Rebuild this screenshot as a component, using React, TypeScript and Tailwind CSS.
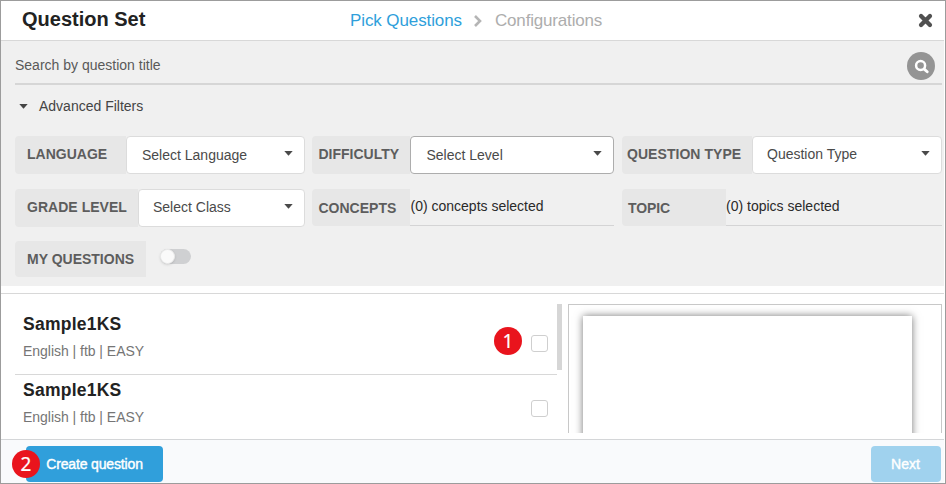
import type { ReactNode } from "react";

function Caret({ className = "" }: { className?: string }) {
  return (
    <svg className={className} width="9" height="5" viewBox="0 0 9 5" fill="currentColor">
      <path d="M0.3 0h8.4L4.5 4.8z" />
    </svg>
  );
}

function Label({ children, className }: { children: ReactNode; className: string }) {
  return (
    <div className={`flex shrink-0 items-center bg-[#e7e7e7] text-sm font-bold whitespace-nowrap text-[#5d5d5d] ${className}`}>
      {children}
    </div>
  );
}

function Select({ children, className, text = "" }: { children: ReactNode; className: string; text?: string }) {
  return (
    <button className={`flex h-[38px] flex-1 items-center justify-between rounded border bg-white text-sm whitespace-nowrap text-[#4a4a4a] ${className}`}>
      <span className={text}>{children}</span>
      <Caret className="mb-1" />
    </button>
  );
}

function Picked({ children, className = "" }: { children: ReactNode; className?: string }) {
  return (
    <div className={`h-[37px] flex-1 border-b border-[#d4d4d5] pt-[7px] text-sm leading-5 whitespace-nowrap text-[#2a2a2a] ${className}`}>
      {children}
    </div>
  );
}

function Question({ title, className, box }: { title: string; className: string; box: string }) {
  return (
    <div className={`flex justify-between pr-[9px] pl-2 ${className}`}>
      <div>
        <h3 className="text-[17.5px] leading-6 font-bold tracking-[0.25px] text-[#222]">{title}</h3>
        <p className="mt-[5px] text-sm leading-5 tracking-[-0.03px] text-[#757575]">English | ftb | EASY</p>
      </div>
      <span className={`size-[17px] rounded-[3px] border border-[#cfcfcf] bg-white ${box}`} />
    </div>
  );
}

export default function App() {
  return (
    <div className="flex h-[484px] w-[946px] flex-col overflow-hidden border border-[#9c9c9c] bg-white font-['Liberation_Sans',Arial,sans-serif]">
      <header className="mr-px flex h-10 shrink-0 items-center border-b border-[#d8d8d8] pr-[11px] pl-[21px]">
        <h1 className="w-[328px] pb-[3px] text-[20px] leading-6 font-bold text-[#222]">Question Set</h1>
        <nav className="flex items-center text-[17px] leading-6">
          <span className="w-[123px] tracking-[-0.1px] text-[#2f9fdb]">Pick Questions</span>
          <svg width="10" height="12" viewBox="0 0 10 12" fill="none" stroke="#b5b5b5" strokeWidth="2.6" className="mr-[12px]">
            <path d="M2 1l5 5-5 5" />
          </svg>
          <span className="tracking-[-0.18px] text-[#adadad]">Configurations</span>
        </nav>
        <svg className="mb-px ml-auto" width="15" height="15" viewBox="0 0 15 15" stroke="#505050" strokeWidth="4.2" strokeLinejoin="round">
          <path d="M2.6 2.6l9.8 9.8M12.4 2.6L2.6 12.4" strokeWidth="3.6" />
          <path d="M3 3l9 9M12 3L3 12" strokeLinecap="round" />
        </svg>
      </header>

      <section className="mr-px h-[245px] shrink-0 bg-[#f0f0f0] pr-[2px] pl-[14px]">
        <div className="flex h-11 justify-between border-b-2 border-[#d6d6d6] pr-[7px]">
          <span className="pt-[14px] text-sm leading-5 text-[#595959]">Search by question title</span>
          <button className="mt-[11px] flex size-7 items-center justify-center rounded-full bg-[#949494]">
            <svg width="15" height="15" viewBox="0 0 15 15" fill="none" stroke="#fff" strokeLinecap="round">
              <circle cx="6.6" cy="6.5" r="4.5" strokeWidth="2.5" />
              <path d="M10.2 10.1l3 2.7" strokeWidth="2.8" />
            </svg>
          </button>
        </div>
        <div className="flex h-[51px] items-start pt-[11px] pl-1 text-sm leading-5 text-[#444]">
          <Caret className="mt-2 mr-[11px]" />
          Advanced Filters
        </div>

        <div className="grid grid-cols-[290px_302px_320px] justify-between">
          <div className="flex">
            <Label className="h-[38px] w-[111px] rounded-l pb-[2px] pl-3">LANGUAGE</Label>
            <Select className="border-[#dcdcdc] pr-[11px] pl-[15px]">Select Language</Select>
          </div>
          <div className="-ml-px mr-px flex">
            <Label className="h-[38px] w-[98px] rounded-l pb-[2px] pl-[7px]">DIFFICULTY</Label>
            <Select className="border-[#adadad] pr-[11px] pl-4">Select Level</Select>
          </div>
          <div className="flex">
            <Label className="h-[38px] w-[130px] rounded-l pb-[2px] pl-[5px] tracking-[0.05px]">QUESTION TYPE</Label>
            <Select className="border-[#dcdcdc] pr-[11px] pl-[14px]" text="pb-[2px]">Question Type</Select>
          </div>
        </div>

        <div className="mt-[15px] grid grid-cols-[290px_302px_320px] justify-between">
          <div className="flex">
            <Label className="h-[38px] w-[123px] rounded-l pb-[2px] pl-3 tracking-[0.03px]">GRADE LEVEL</Label>
            <Select className="border-[#dcdcdc] pr-[11px] pl-[14px]" text="pb-[2px]">Select Class</Select>
          </div>
          <div className="-ml-px mr-px flex">
            <Label className="h-[37px] w-[98px] rounded-l pl-[7px]">CONCEPTS</Label>
            <Picked className="pl-px">(0) concepts selected</Picked>
          </div>
          <div className="flex">
            <Label className="h-[37px] w-[104px] rounded-l pl-[6px] tracking-[-0.1px]">TOPIC</Label>
            <Picked>(0) topics selected</Picked>
          </div>
        </div>

        <div className="mt-[14px] flex">
          <Label className="h-9 w-[131px] rounded-l pl-3">MY QUESTIONS</Label>
          <span className="mt-2 ml-[14px] flex h-[15px] w-[31px] items-center rounded-full bg-[#cfd0d2]">
            <span className="size-[15px] rounded-full border border-[#ececec] bg-[#fafafa] shadow-sm" />
          </span>
        </div>
      </section>

      <main className="mt-[7px] mr-px flex h-[146px] shrink-0 border-t border-[#d8d8d8] pt-[10px] pb-[6px] pl-[14px]">
        <div className="w-[542px]">
          <Question title="Sample1KS" className="h-[71px] border-b border-[#d8d8d8] pt-[8px]" box="mt-[23px]" />
          <Question title="Sample1KS" className="pt-[3px]" box="mt-[22px]" />
        </div>
        <div className="h-[66px] w-[5px] bg-[#d6d6d6]" />
        <div className="ml-[6px] w-[374px] overflow-hidden border border-b-0 border-[#c8c8c8] pt-[11px] pr-[29px] pl-[14px]">
          <div className="h-[200px] bg-white shadow-[0_0_8px_0_#777]" />
        </div>
      </main>

      <footer className="mr-px flex flex-1 items-start justify-between border-t border-[#d4d6d8] bg-[#f9fafc] pt-[6px] pr-[3px] pl-[25px] text-sm">
        <button className="relative h-9 w-[137px] rounded bg-[#309fdb] tracking-[-0.15px] text-white [-webkit-text-stroke:0.4px_white]">
          Create question
          <Badge className="top-[4px] left-[-14px]">2</Badge>
        </button>
        <button className="h-9 w-[70px] rounded bg-[#a0d2ee] pr-px text-white [-webkit-text-stroke:0.4px_white]">Next</button>
      </footer>
      <Badge className="top-[327px] left-[494px]">1</Badge>
    </div>
  );
}

function Badge({ children, className }: { children: ReactNode; className: string }) {
  return (
    <span className={`absolute flex size-7 items-center justify-center rounded-full bg-[#e9141d] font-['Noto_Sans',sans-serif] text-[19px] leading-none tracking-normal text-white [-webkit-text-stroke:0.2px_white] ${className}`}>
      {children}
    </span>
  );
}
